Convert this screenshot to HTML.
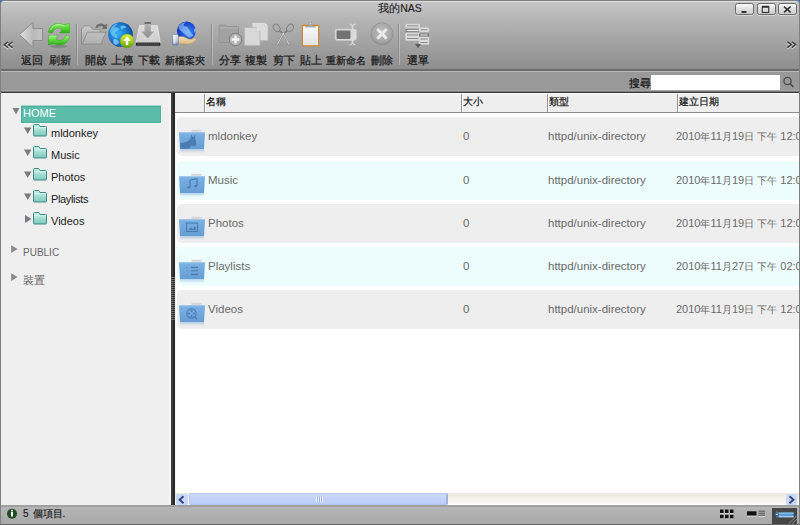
<!DOCTYPE html>
<html><head><meta charset="utf-8">
<style>
*{margin:0;padding:0;box-sizing:border-box}
html,body{width:800px;height:525px;overflow:hidden;background:#3a6ea5;font-family:"Liberation Sans",sans-serif}
.a{position:absolute}
#win{position:absolute;left:0;top:0;width:800px;height:525px;background:#9a9a9a;border:1px solid #808080;border-bottom-color:#666;border-radius:4px 4px 0 0;overflow:hidden}
#tb{position:absolute;left:0;top:0;width:798px;height:68px;background:linear-gradient(#dedede 0,#dedede 1px,#c6c6c6 1px,#b6b6b6 25%,#8e8e8e 100%)}
.title{position:absolute;left:0;top:1px;width:798px;text-align:center;font-size:10.5px;color:#222;-webkit-text-stroke:0.15px #222}
.lbl{position:absolute;top:53px;font-size:10.5px;color:#1a1a1a;white-space:nowrap;-webkit-text-stroke:0.25px #1a1a1a}
.sep{position:absolute;top:23px;width:1px;height:41px;background:#8c8c8c;box-shadow:1px 0 0 rgba(255,255,255,.28)}
.wbtn{position:absolute;top:2px;width:19px;height:12px;border:1px solid #6c6c6c;border-radius:2.5px;background:linear-gradient(#fbfbfb,#e6e6e6 35%,#cbcbcb);box-shadow:0 1px 0 rgba(255,255,255,.4)}
#sb{position:absolute;left:0;top:68px;width:798px;height:24px;background:#999999;border-top:2px solid #6c6c6c;border-bottom:1px solid #3c3c3c}
#sb:before{content:"";position:absolute;left:0;top:0;width:100%;height:1px;background:#b8b8b8}#sb:after{content:"";position:absolute;left:0;bottom:0;width:100%;height:2px;background:linear-gradient(#a4a4a4 50%,#787878 50%)}
#left{position:absolute;left:0;top:92px;width:170px;height:412px;background:#efefef}
#div{position:absolute;left:170px;top:92px;width:4px;height:412px;background:linear-gradient(to right,#3c3c3c 0,#3a3a3a 50%,#2c2c2c 50%,#262626 100%)}#right:before{content:"";position:absolute;left:0;top:0;width:1px;height:100%;background:#f3f3f3}#left:after{content:"";position:absolute;right:0;top:0;width:2px;height:100%;background:#f5f5f5}
#right{position:absolute;left:174px;top:92px;width:624px;height:412px;background:#fff;overflow:hidden}
#hdr{position:absolute;left:0;top:0;width:624px;height:20px;background:linear-gradient(#f6f6f6 0,#f6f6f6 1px,#eeeeee 2px);border-bottom:1px solid #8c8c8c}
.hs{position:absolute;top:1px;width:2px;height:18px;border-left:1px solid #959595;border-right:1px solid #fff}
.ht{position:absolute;top:2px;font-size:10px;color:#111;-webkit-text-stroke:0.2px #111}
.row{position:absolute;left:2px;width:640px;height:39px;border-radius:5px;background:#eeeeee}
.row.c{background:#edfdfd}
.rt{position:absolute;top:13px;font-size:11.5px;color:#6a6a6a;white-space:nowrap}.dt{font-size:11px;top:13px}.cj{font-size:10px}
.tree{position:absolute;font-size:11px;color:#222;white-space:nowrap}
#status{position:absolute;left:0;top:504px;width:798px;height:19px;background:linear-gradient(#b6b6b6,#a8a8a8);border-top:2px solid #a0a0a0}
</style></head><body>
<div id="win">
 <div id="tb">
  <div class="title">我的NAS</div>
  <div class="wbtn" style="left:734px"></div>
  <div class="wbtn" style="left:756px"></div>
  <div class="wbtn" style="left:777px"></div>
  <div class="lbl" style="left:20px">返回</div>
  <div class="lbl" style="left:48px">刷新</div>
  <div class="sep" style="left:75px"></div>
  <div class="lbl" style="left:84px">開啟</div>
  <div class="lbl" style="left:110px">上傳</div>
  <div class="lbl" style="left:137px">下載</div>
  <div class="lbl" style="left:164px;font-size:10px;top:53px">新檔案夾</div>
  <div class="sep" style="left:210px"></div>
  <div class="lbl" style="left:218px">分享</div>
  <div class="lbl" style="left:244px">複製</div>
  <div class="lbl" style="left:272px">剪下</div>
  <div class="lbl" style="left:299px">貼上</div>
  <div class="lbl" style="left:325px;font-size:10.2px;top:53px">重新命名</div>
  <div class="lbl" style="left:370px">刪除</div>
  <div class="sep" style="left:397px"></div>
  <div class="lbl" style="left:406px">選單</div>
 </div>
 <div id="sb">
  <div class="a" style="left:628px;top:6px;font-size:10.5px;color:#111;-webkit-text-stroke:0.2px #111">搜尋</div>
  <div class="a" style="left:650px;top:4px;width:129px;height:16px;background:#fff"></div>
 </div>
 <div id="left">
  <div class="a" style="left:20px;top:13px;width:140px;height:17px;background:#5bbcaa;border:1px solid #4caf9c;box-shadow:0 -1px 0 #a6d6ce,0 1px 0 #fbf6f6,1px 0 0 #fbf6f6"></div>
  <div class="tree" style="left:22px;top:14px;color:#fff;font-size:11px">HOME</div>
  <div class="tree" style="left:50px;top:34px">mldonkey</div>
  <div class="tree" style="left:50px;top:56px">Music</div>
  <div class="tree" style="left:50px;top:78px">Photos</div>
  <div class="tree" style="left:50px;top:100px;letter-spacing:-0.35px">Playlists</div>
  <div class="tree" style="left:50px;top:122px">Videos</div>
  <div class="tree" style="left:22px;top:154px;color:#666;font-size:10px">PUBLIC</div>
  <div class="tree" style="left:22px;top:181px;color:#666;font-size:10.5px">裝置</div>
 </div>
 <div id="div"></div>
 <div id="right">
  <div id="hdr">
   <div class="hs" style="left:29px"></div>
   <div class="ht" style="left:31px">名稱</div>
   <div class="hs" style="left:286px"></div>
   <div class="ht" style="left:288px">大小</div>
   <div class="hs" style="left:372px"></div>
   <div class="ht" style="left:374px">類型</div>
   <div class="hs" style="left:502px"></div>
   <div class="ht" style="left:504px">建立日期</div>
  </div>
  <div class="row" style="top:24px">
   <div class="rt" style="left:31px">mldonkey</div><div class="rt" style="left:286px">0</div><div class="rt" style="left:371px">httpd/unix-directory</div><div class="rt dt" style="left:499px">2010<span class="cj">年</span>11<span class="cj">月</span>19<span class="cj">日</span> <span class="cj">下午</span> 12:04</div>
  </div>
  <div class="row c" style="top:68px">
   <div class="rt" style="left:31px">Music</div><div class="rt" style="left:286px">0</div><div class="rt" style="left:371px">httpd/unix-directory</div><div class="rt dt" style="left:499px">2010<span class="cj">年</span>11<span class="cj">月</span>19<span class="cj">日</span> <span class="cj">下午</span> 12:04</div>
  </div>
  <div class="row" style="top:111px">
   <div class="rt" style="left:31px">Photos</div><div class="rt" style="left:286px">0</div><div class="rt" style="left:371px">httpd/unix-directory</div><div class="rt dt" style="left:499px">2010<span class="cj">年</span>11<span class="cj">月</span>19<span class="cj">日</span> <span class="cj">下午</span> 12:04</div>
  </div>
  <div class="row c" style="top:154px">
   <div class="rt" style="left:31px">Playlists</div><div class="rt" style="left:286px">0</div><div class="rt" style="left:371px">httpd/unix-directory</div><div class="rt dt" style="left:499px">2010<span class="cj">年</span>11<span class="cj">月</span>27<span class="cj">日</span> <span class="cj">下午</span> 02:04</div>
  </div>
  <div class="row" style="top:197px">
   <div class="rt" style="left:31px">Videos</div><div class="rt" style="left:286px">0</div><div class="rt" style="left:371px">httpd/unix-directory</div><div class="rt dt" style="left:499px">2010<span class="cj">年</span>11<span class="cj">月</span>19<span class="cj">日</span> <span class="cj">下午</span> 12:04</div>
  </div>
 </div>
 <div id="status">
  <div class="a" style="left:22px;top:0px;font-size:10px;color:#222;-webkit-text-stroke:0.2px #222">5<span style="margin-left:4px">個項目.</span></div>
 </div>
</div>
<svg class="a" style="left:0;top:0" width="800" height="70" viewBox="0 0 800 70">
<defs>
 <linearGradient id="gArrow" x1="0" y1="0" x2="1" y2="0"><stop offset="0" stop-color="#e2e2e2"/><stop offset="0.6" stop-color="#b8b8b8"/><stop offset="1" stop-color="#c6c6c6"/></linearGradient>
 <linearGradient id="gGreen" x1="0" y1="0" x2="0" y2="1"><stop offset="0" stop-color="#8ae86e"/><stop offset="0.55" stop-color="#52d432"/><stop offset="1" stop-color="#2ea818"/></linearGradient>
 <radialGradient id="gGlobe" cx="0.4" cy="0.45" r="0.7"><stop offset="0" stop-color="#38b0f8"/><stop offset="0.6" stop-color="#1670c8"/><stop offset="1" stop-color="#0a2a68"/></radialGradient>
 <radialGradient id="gGlobe2" cx="0.6" cy="0.55" r="0.65"><stop offset="0" stop-color="#3a90f0"/><stop offset="0.6" stop-color="#1e50d8"/><stop offset="1" stop-color="#0c2ab0"/></radialGradient>
 <linearGradient id="gLime" x1="0" y1="0" x2="0" y2="1"><stop offset="0" stop-color="#e0f040"/><stop offset="0.5" stop-color="#a8d020"/><stop offset="1" stop-color="#5a9a08"/></linearGradient>
 <linearGradient id="gTray" x1="0" y1="0" x2="0" y2="1"><stop offset="0" stop-color="#dedede"/><stop offset="1" stop-color="#cdcdcd"/></linearGradient>
 <linearGradient id="gFold" x1="0" y1="0" x2="0" y2="1"><stop offset="0" stop-color="#cacaca"/><stop offset="1" stop-color="#a6a6a6"/></linearGradient><linearGradient id="gFlap" x1="0" y1="0" x2="0" y2="1"><stop offset="0" stop-color="#c0c0c0"/><stop offset="1" stop-color="#b0b0b0"/></linearGradient>
 <radialGradient id="gDel" cx="0.5" cy="0.4" r="0.6"><stop offset="0" stop-color="#bdbdbd"/><stop offset="0.8" stop-color="#a4a4a4"/><stop offset="1" stop-color="#8a8a8a"/></radialGradient>
 <linearGradient id="gClip" x1="0" y1="0" x2="0" y2="1"><stop offset="0" stop-color="#fafafa"/><stop offset="1" stop-color="#e2e2e2"/></linearGradient>
 <linearGradient id="gSkin" x1="0" y1="0" x2="0" y2="1"><stop offset="0" stop-color="#f4e2bc"/><stop offset="1" stop-color="#d8b880"/></linearGradient>
 <linearGradient id="gCuff" x1="0" y1="0" x2="1" y2="0"><stop offset="0" stop-color="#6a7aa0"/><stop offset="0.4" stop-color="#e8ecf4"/><stop offset="1" stop-color="#7080a8"/></linearGradient>
<linearGradient id="gGreenR" x1="0" y1="1" x2="0" y2="0"><stop offset="0" stop-color="#a0f088"/><stop offset="0.5" stop-color="#58d838"/><stop offset="1" stop-color="#2ea818"/></linearGradient>
<linearGradient id="gCuffV" x1="0" y1="0" x2="0" y2="1"><stop offset="0" stop-color="#f4f4fa"/><stop offset="0.6" stop-color="#c0c8dc"/><stop offset="1" stop-color="#7080a8"/></linearGradient>
<linearGradient id="gDArr" x1="0" y1="0" x2="0" y2="1"><stop offset="0" stop-color="#b4b4b4"/><stop offset="1" stop-color="#8e8e8e"/></linearGradient>
</defs>
<!-- << -->
<path d="M8.2 43.3 L4.3 46.3 L8.2 49.3 M12.6 43.3 L8.7 46.3 L12.6 49.3" fill="none" stroke="#dedede" stroke-width="1.3" opacity="0.8"/>
<path d="M8.2 41.8 L4.3 44.8 L8.2 47.8 M12.6 41.8 L8.7 44.8 L12.6 47.8" fill="none" stroke="#3e3e3e" stroke-width="1.4"/>
<!-- >> -->
<path d="M787.4 43.2 L791.3 46.1 L787.4 49.1 M791.8 43.2 L795.7 46.1 L791.8 49.1" fill="none" stroke="#dedede" stroke-width="1.3" opacity="0.8"/>
<path d="M787.4 41.7 L791.3 44.6 L787.4 47.6 M791.8 41.7 L795.7 44.6 L791.8 47.6" fill="none" stroke="#3e3e3e" stroke-width="1.4"/>
<!-- back arrow -->
<path d="M19.5 34.5 L33 22.5 L33 28.5 L42.5 28.5 L42.5 40.5 L33 40.5 L33 47.5 Z" fill="url(#gArrow)" stroke="#8c8c8c" stroke-width="1" stroke-linejoin="miter"/>
<!-- refresh -->
<ellipse cx="59" cy="46.3" rx="8.5" ry="1.6" fill="#444" opacity="0.3"/>
<g id="rfa"><path d="M48.6 31.8 C49.5 26.5 53.5 23.3 58.5 23.3 C60.5 23.3 62.3 23.9 63.8 24.7 L69.6 23.4 L69.6 33 L59.5 33 L62.2 29.6 C61 28.6 59.8 28 58.3 28 C55.6 28 53.5 29.6 52.8 32 C52.2 33.4 48.3 33.2 48.6 31.8 Z" fill="url(#gGreen)" stroke="#38a41c" stroke-width="0.7" stroke-opacity="0.7"/>
<path d="M50.5 30 C51.8 26.5 55 24.6 58.6 24.6 C61 24.6 63 25.5 64.5 26.5" fill="none" stroke="#d8ffc8" stroke-width="0.9" opacity="0.7"/></g>
<path transform="rotate(180 59 34.2)" d="M48.6 31.8 C49.5 26.5 53.5 23.3 58.5 23.3 C60.5 23.3 62.3 23.9 63.8 24.7 L69.6 23.4 L69.6 33 L59.5 33 L62.2 29.6 C61 28.6 59.8 28 58.3 28 C55.6 28 53.5 29.6 52.8 32 C52.2 33.4 48.3 33.2 48.6 31.8 Z" fill="url(#gGreenR)" stroke="#38a41c" stroke-width="0.7" stroke-opacity="0.7"/>
<path d="M50 36 L56 36" stroke="#d8ffc8" stroke-width="0.9" opacity="0.6"/>
<!-- open folder -->
<path d="M81.5 29 L84.2 25.8 L89.8 25.8 L92.8 29.3 L100.2 29.3 L100.2 43.8 L81.5 43.8 Z" fill="url(#gFold)" stroke="#8c8c8c" stroke-width="0.9"/>
<path d="M82.4 44 L87.2 32.2 L105.7 32.2 L101.2 44 Z" fill="url(#gFlap)" stroke="#8c8c8c" stroke-width="0.9"/>
<path d="M95.3 27.3 C96.3 24.6 99 23.2 101.5 23.5 C103 23.8 104 24.5 104.8 25.3 L106.9 23.6 L106.9 28.9 L101.7 28.7 L103.3 27.1 C102.6 26.4 101.7 26 100.8 26 C99.1 26 97.9 26.7 97.4 28 Z" fill="#6c6c6c"/>
<!-- globe upload -->
<circle cx="120.5" cy="34.5" r="12.3" fill="url(#gGlobe)"/>
<path d="M110 31 C111 27 114 24 118 23.5 C117 25 115 25.5 114.5 27 C116 28 118 27 119 29 C118 31 116 31 115 33 C116 35 118 36 117.5 38 C115 38 112 36 111 34 Z" fill="#8fe0ff" opacity="0.55"/>
<path d="M121 26 C123 25 125 25.5 126.5 27 C125.5 28.5 123 28 121.5 29 C120.5 28 120.5 27 121 26 Z M114 39 C116 38.5 118.5 40 119 42.5 C118 44.5 116 45.5 114 44 C113 42 113 40.5 114 39 Z" fill="#a8e8ff" opacity="0.6"/>
<circle cx="127" cy="41" r="6.9" fill="url(#gLime)" stroke="#7aa820" stroke-width="0.5"/>
<path d="M127 36.6 L130.6 40.8 L128.2 40.8 L128.2 45.2 L125.8 45.2 L125.8 40.8 L123.4 40.8 Z" fill="#fff"/>
<!-- download -->
<path d="M139.5 25.6 L157.5 25.6 L160.3 42.6 L136 42.6 Z" fill="url(#gTray)" stroke="#eeeeee" stroke-width="0.6"/>
<rect x="136" y="42.4" width="24.3" height="3.3" rx="0.6" fill="#262626"/>
<path d="M137.5 44 H159" stroke="#8a8a8a" stroke-width="0.9" stroke-dasharray="1.2 0.8"/>
<rect x="144.5" y="22" width="6.5" height="1.9" fill="#6e6e6e"/>
<path d="M144.6 24 L150.9 24 L150.9 31.5 L154.2 31.5 L147.75 38.3 L141.3 31.5 L144.6 31.5 Z" fill="url(#gDArr)"/>
<path d="M142 38.5 H153.5" stroke="#eaeaea" stroke-width="0.5" opacity="0.7"/>
<!-- globe hand -->
<circle cx="186.4" cy="31" r="9.4" fill="url(#gGlobe2)"/>
<path d="M178.5 26 C180 23.5 183 22.2 186 22.2 C185 23.5 183.5 24 183.5 25.5 C185 26.5 187 26.5 188 28 C189.5 30.5 191 33 193.5 35 C192.5 37 190.5 37.5 189 37.5 C186 35.5 183.5 33 181 31 C179.5 30 178.5 28 178.5 26 Z" fill="#c8e4ff" opacity="0.5"/>
<path d="M195 28 C195.8 29.5 195.8 31.5 195 33 C194 32 194 29 195 28 Z" fill="#e0f0ff" opacity="0.7"/>
<path d="M178 37 C180.5 36 183 36.3 185.5 37.6 C187.5 38.7 189.5 39.6 191.5 39.2 C193.5 38.8 195 38 196.3 38.4 C195.5 41.5 192 44.2 187.5 44.2 C184 44.2 181 43.8 178 43.6 Z" fill="url(#gSkin)" stroke="#b0905a" stroke-width="0.5"/>
<rect x="172.4" y="34.6" width="5.8" height="10.6" rx="0.8" fill="url(#gCuffV)" stroke="#6878a0" stroke-width="0.6"/>
<rect x="173.6" y="35.5" width="1.8" height="8.5" fill="#ffffff" opacity="0.6"/>
<!-- share folder -->
<path d="M219 25 L225.5 25 L226.5 26.5 L238.5 26.5 L238.5 42.5 L219 42.5 Z" fill="#a2a2a2" stroke="#949494" stroke-width="1"/>
<rect x="219.5" y="27" width="18.5" height="2" fill="#b2b2b2" opacity="0.6"/>
<circle cx="235.5" cy="39.5" r="6.3" fill="#b4b4b4" stroke="#7c7c7c" stroke-width="1"/>
<path d="M235.5 35.5 V43.5 M231.5 39.5 H239.5" stroke="#f4f4f4" stroke-width="2.4"/>
<!-- copy -->
<path d="M252 22.5 L264.5 22.5 L268 26 L268 40.5 L252 40.5 Z" fill="#dcdcdc" stroke="#b6b6b6" stroke-width="0.8"/>
<path d="M244.5 27.5 L256.5 27.5 L260 31 L260 45.5 L244.5 45.5 Z" fill="#d8d8d8" stroke="#b6b6b6" stroke-width="0.8"/>
<path d="M256.5 27.5 L256.5 31 L260 31" fill="#f2f2f2" stroke="#c4c4c4" stroke-width="0.6"/>
<path d="M264.5 22.5 L264.5 26 L268 26" fill="#f2f2f2" stroke="#c4c4c4" stroke-width="0.6"/>
<!-- scissors -->
<ellipse cx="283.5" cy="44.6" rx="12" ry="1.2" fill="#8a8a8a" opacity="0.3"/>
<ellipse cx="276.6" cy="27.9" rx="3" ry="4" transform="rotate(-38 276.6 27.9)" fill="none" stroke="#868686" stroke-width="1.05"/>
<ellipse cx="290" cy="27.9" rx="3" ry="4" transform="rotate(38 290 27.9)" fill="none" stroke="#868686" stroke-width="1.05"/>
<path d="M279.2 30.6 L283.3 33.6 M287.4 30.6 L283.3 33.6" stroke="#7a7a7a" stroke-width="1.4"/>
<path d="M283.6 32.8 L277.2 44.6 M283 32.8 L289 44.6" stroke="#8c8c8c" stroke-width="2"/>
<path d="M283.6 32.8 L277.2 44.6 M283 32.8 L289 44.6" stroke="#e6e6e6" stroke-width="0.8"/>
<!-- clipboard -->
<rect x="301.8" y="24.7" width="17.4" height="21.7" rx="0.8" fill="#c8862e"/>
<rect x="302.6" y="25.5" width="15.8" height="20.1" fill="#e0a050" opacity="0.5"/>
<rect x="303" y="26.3" width="15" height="18.9" fill="url(#gClip)"/>
<path d="M305.5 27 C307 26.2 308.5 25.6 309.5 25 L311.5 25 C312.5 25.6 314 26.2 315.5 27 Z" fill="#bdbdbd" stroke="#8a8a8a" stroke-width="0.6"/>
<circle cx="310.5" cy="23.8" r="1.3" fill="#dadada" stroke="#8a8a8a" stroke-width="0.7"/>
<!-- rename -->
<rect x="335" y="29" width="21.5" height="11.5" rx="2" fill="#dcdcdc" stroke="#c8c8c8" stroke-width="0.6"/>
<rect x="336.5" y="30.5" width="14" height="8.5" rx="1" fill="#727272"/>
<path d="M352.5 25 V44" stroke="#dadada" stroke-width="1.6"/>
<path d="M349.5 24 C351 24 352 25 352.5 26 C353 25 354 24 355.5 24 M349.5 45 C351 45 352 44 352.5 43 C353 44 354 45 355.5 45" fill="none" stroke="#dadada" stroke-width="1.1"/>
<!-- delete -->
<circle cx="382" cy="33.8" r="11" fill="url(#gDel)" stroke="#8a8a8a" stroke-width="0.6"/>
<path d="M377.3 29 L386.7 38.6 M386.7 29 L377.3 38.6" stroke="#eaeaea" stroke-width="3"/>
<!-- menu -->
<rect x="405.5" y="24" width="14.5" height="3.7" rx="0.8" fill="#e0e0e0" stroke="#c8c8c8" stroke-width="0.5"/>
<rect x="407" y="25.3" width="11.5" height="1" fill="#8a8a8a"/>
<rect x="405.5" y="29" width="14.5" height="3" fill="#8c8c8c"/>
<rect x="407" y="30" width="11.5" height="1" fill="#f0f0f0"/>
<rect x="405.5" y="33" width="14.5" height="7.7" rx="0.8" fill="#dcdcdc" stroke="#c8c8c8" stroke-width="0.5"/>
<rect x="407" y="34.5" width="11.5" height="1" fill="#8a8a8a"/>
<rect x="407" y="38" width="11.5" height="1" fill="#8a8a8a"/>
<rect x="419" y="27.7" width="10" height="4.2" rx="0.8" fill="#e0e0e0" stroke="#c8c8c8" stroke-width="0.5"/>
<rect x="420.5" y="29.2" width="7" height="1" fill="#8a8a8a"/>
<rect x="419" y="33.5" width="10" height="3" fill="#7a7a7a"/>
<rect x="420.5" y="34.5" width="7" height="1" fill="#f0f0f0"/>
<rect x="419" y="37" width="10" height="7.5" rx="0.8" fill="#dcdcdc" stroke="#c8c8c8" stroke-width="0.5"/>
<rect x="420.5" y="38.5" width="7" height="1" fill="#8a8a8a"/>
<rect x="420.5" y="42" width="7" height="1" fill="#8a8a8a"/>
<path d="M415 44 L421 44 L418 48 Z" fill="#5a5a5a"/>
<!-- window buttons glyphs -->
<rect x="741.5" y="11" width="5" height="2" fill="#333"/>
<rect x="762.3" y="6.3" width="6.4" height="6.2" fill="none" stroke="#333" stroke-width="1.1"/>
<rect x="762" y="6" width="7" height="1.8" fill="#333"/>
<path d="M784 6.7 L790.6 12.3 M790.6 6.7 L784 12.3" stroke="#333" stroke-width="1.6"/>
</svg>

<svg class="a" style="left:0;top:0" width="800" height="525" viewBox="0 0 800 525">
<defs>
 <linearGradient id="gTeal" x1="0" y1="0" x2="0" y2="1"><stop offset="0" stop-color="#c6f0ea"/><stop offset="1" stop-color="#80c8bc"/></linearGradient>
 <linearGradient id="gBlue" x1="0" y1="0" x2="0" y2="1"><stop offset="0" stop-color="#7cb2e4"/><stop offset="1" stop-color="#659dd4"/></linearGradient>
 <linearGradient id="gRefl" x1="0" y1="0" x2="0" y2="1"><stop offset="0" stop-color="#6c9ed6" stop-opacity="0.45"/><stop offset="1" stop-color="#6c9ed6" stop-opacity="0"/></linearGradient>
 <g id="tfold">
  <path d="M33.5 125.5 Q33.5 124.5 34.5 124.5 L38 124.5 Q39 124.5 39.5 125.5 L40 126.5 L45.5 126.5 Q46.5 126.5 46.5 127.5 L46.5 135 Q46.5 136 45.5 136 L34.5 136 Q33.5 136 33.5 135 Z" fill="url(#gTeal)" stroke="#3e8a80" stroke-width="1"/>
  <rect x="34.2" y="127.3" width="11.6" height="1" fill="#e4fbf8" opacity="0.8"/>
 </g>
 <g id="bfold">
  <rect x="191.5" y="129.8" width="10" height="2" fill="#d4d4d4"/>
  <path d="M179 132.5 L205 132.5 L204 149 L180 149 Z" fill="url(#gBlue)"/>
  <rect x="179.5" y="132.5" width="25" height="1" fill="#8ab8e6"/>
  <rect x="180" y="149" width="24" height="4" fill="url(#gRefl)"/>
 </g>
</defs>
<!-- HOME triangle -->
<path d="M12.5 108 L19.5 108 L16 114.5 Z" fill="#808080"/>
<!-- tree triangles -->
<path d="M24 127.5 L31.5 127.5 L27.75 134 Z" fill="#7a7a80"/>
<path d="M24 149.5 L31.5 149.5 L27.75 156 Z" fill="#7a7a80"/>
<path d="M24 171.5 L31.5 171.5 L27.75 178 Z" fill="#7a7a80"/>
<path d="M24 193.5 L31.5 193.5 L27.75 200 Z" fill="#7a7a80"/>
<path d="M25 215 L31.5 219 L25 223 Z" fill="#7a7a80"/>
<path d="M11.2 245.2 L17.6 249 L11.2 252.9 Z" fill="#8a8a8a"/>
<path d="M11.2 273.3 L17.6 277.1 L11.2 281 Z" fill="#8a8a8a"/>
<use href="#tfold"/>
<use href="#tfold" y="22"/>
<use href="#tfold" y="44"/>
<use href="#tfold" y="66"/>
<use href="#tfold" y="88"/>
<!-- row folders -->
<use href="#bfold"/>
<use href="#bfold" y="44"/>
<use href="#bfold" y="87"/>
<use href="#bfold" y="130"/>
<use href="#bfold" y="173"/>
<!-- donkey -->
<path d="M180.3 143.2 L184.6 142.3 C187 141.5 189 140.5 190.2 139 L191.3 134.6 L193 137.2 L195.7 134.3 L195 138.5 C195.8 140.5 196.5 142.5 196.3 144.6 L194.9 146.3 C193.5 146 192.3 145.6 191.4 145.4 L189 148.4 L180.6 148.8 Z" fill="#4b7db5"/>
<!-- music note -->
<path d="M190 180 L197 178.8 L197 186 M190 180 V187.5" fill="none" stroke="#4a7cb4" stroke-width="1.2"/>
<ellipse cx="188.6" cy="187.6" rx="1.6" ry="1.1" fill="#4a7cb4"/>
<ellipse cx="195.6" cy="186.2" rx="1.6" ry="1.1" fill="#4a7cb4"/>
<!-- photo -->
<rect x="186.5" y="223" width="11" height="8.5" fill="none" stroke="#4a7cb4" stroke-width="1.1"/>
<path d="M188.5 230 L191 227.5 L193 229.5 L195 226 L196 230 Z" fill="#4a7cb4"/>
<!-- list -->
<path d="M186.5 267.5 h1.5 M186.5 271 h1.5 M186.5 274.5 h1.5" stroke="#4a7cb4" stroke-width="1" stroke-dasharray="0.8 0.6"/>
<path d="M191 267.4 h7 M191 270.8 h7 M191 274.4 h7" stroke="#4a7cb4" stroke-width="1.1"/>
<!-- reel -->
<circle cx="191.5" cy="313.5" r="4.6" fill="none" stroke="#4a7cb4" stroke-width="1.1"/>
<circle cx="191.5" cy="311" r="1" fill="#4a7cb4"/><circle cx="191.5" cy="316" r="1" fill="#4a7cb4"/><circle cx="189" cy="313.5" r="1" fill="#4a7cb4"/><circle cx="194" cy="313.5" r="1" fill="#4a7cb4"/>
<path d="M194.5 317 L197 319" stroke="#4a7cb4" stroke-width="1.1"/>
<!-- grip -->
<g fill="#6c6c6c">
<rect x="171" y="277" width="4" height="1"/><rect x="171" y="279" width="4" height="1"/><rect x="171" y="281" width="4" height="1"/><rect x="171" y="283" width="4" height="1"/><rect x="171" y="285" width="4" height="1"/><rect x="171" y="287" width="4" height="1"/><rect x="171" y="289" width="4" height="1"/><rect x="171" y="291" width="4" height="1"/><rect x="171" y="293" width="4" height="1"/><rect x="171" y="295" width="4" height="1"/><rect x="171" y="297" width="4" height="1"/><rect x="171" y="299" width="4" height="1"/><rect x="171" y="301" width="4" height="1"/><rect x="171" y="303" width="4" height="1"/><rect x="171" y="305" width="4" height="1"/><rect x="171" y="307" width="4" height="1"/><rect x="171" y="309" width="4" height="1"/><rect x="171" y="311" width="4" height="1"/><rect x="171" y="313" width="4" height="1"/><rect x="171" y="315" width="4" height="1"/><rect x="171" y="317" width="4" height="1"/><rect x="171" y="319" width="4" height="1"/></g>
<!-- search magnifier -->
<circle cx="787.5" cy="81" r="3.6" fill="none" stroke="#4a4a4a" stroke-width="1.3"/>
<path d="M790 83.6 L793.5 87" stroke="#4a4a4a" stroke-width="1.6"/>
<!-- scrollbar -->
<defs><linearGradient id="gTrk" x1="0" y1="0" x2="0" y2="1"><stop offset="0" stop-color="#ebe7dc"/><stop offset="1" stop-color="#fafaf6"/></linearGradient><linearGradient id="gThumb" x1="0" y1="0" x2="0" y2="1"><stop offset="0" stop-color="#cad9fb"/><stop offset="1" stop-color="#bccdf6"/></linearGradient></defs><rect x="175" y="493" width="624" height="11" fill="url(#gTrk)"/><rect x="175" y="504" width="624" height="1" fill="#ffffff"/>
<rect x="176" y="494" width="12" height="11" rx="1.5" fill="#c8d8fa"/>
<path d="M183.5 496.3 L179.6 499.8 L183.5 503.3" fill="none" stroke="#34447a" stroke-width="1.9"/>
<rect x="189.5" y="493.5" width="258" height="11" rx="1" fill="url(#gThumb)" stroke="#b4c6ee" stroke-width="1"/><rect x="446.5" y="494" width="1" height="10.5" fill="#8a9ac0"/>
<path d="M316.5 496.5 v6 M318.5 496.5 v6 M320.5 496.5 v6 M322.5 496.5 v6" stroke="#eef3ff" stroke-width="1"/><path d="M317.5 496.5 v6 M319.5 496.5 v6 M321.5 496.5 v6" stroke="#9fb2e4" stroke-width="1"/>
<rect x="786" y="494" width="11" height="11" rx="1.5" fill="#c8d8fa"/>
<path d="M789.5 496.3 L793.4 499.8 L789.5 503.3" fill="none" stroke="#34447a" stroke-width="1.9"/>
<!-- status info icon -->
<circle cx="12" cy="513.7" r="5" fill="#224c22"/>
<rect x="11" y="512" width="2" height="4.5" fill="#fff"/>
<rect x="11" y="509.8" width="2" height="1.5" fill="#fff"/>
<!-- grid icon -->
<g fill="#e8e8e8" opacity="0.8">
<rect x="720" y="513" width="3.5" height="0.9"/><rect x="725" y="513" width="3.5" height="0.9"/><rect x="730" y="513" width="3.5" height="0.9"/>
<rect x="720" y="518.3" width="3.5" height="0.9"/><rect x="725" y="518.3" width="3.5" height="0.9"/><rect x="730" y="518.3" width="3.5" height="0.9"/>
<rect x="747" y="515.6" width="9.5" height="1"/>
<rect x="758.5" y="516" width="6.5" height="0.9"/>
</g>
<g fill="#111">
<rect x="720" y="509.5" width="3.5" height="3.5"/><rect x="725" y="509.5" width="3.5" height="3.5"/><rect x="730" y="509.5" width="3.5" height="3.5"/>
<rect x="720" y="514.8" width="3.5" height="3.5"/><rect x="725" y="514.8" width="3.5" height="3.5"/><rect x="730" y="514.8" width="3.5" height="3.5"/>
<rect x="747" y="511.3" width="9.5" height="4.2"/>
</g>
<path d="M758.5 511.2 h6.5 M758.5 513.2 h6.5 M758.5 515.2 h6.5" stroke="#3a3a3a" stroke-width="0.8"/>
<rect x="772" y="508" width="25" height="16" fill="#464646"/>
<rect x="778.5" y="512.6" width="15.2" height="4.6" fill="#5a9ed8"/>
<rect x="778.5" y="512.6" width="15.2" height="1" fill="#9fd0f2"/>
<rect x="778.5" y="516.3" width="15.2" height="1" fill="#c8dcea"/>
<rect x="775.8" y="511.5" width="2" height="2" fill="#3a7ad0"/>
<rect x="775.8" y="513.8" width="2" height="1.2" fill="#f0f0f0"/>
<rect x="775.8" y="515.3" width="2" height="2" fill="#3a7ad0"/>
<path d="M789 523.5 L797 515.5 M792.5 523.5 L797 519" stroke="#9a9a9a" stroke-width="0.8"/>
</svg>


</body></html>
